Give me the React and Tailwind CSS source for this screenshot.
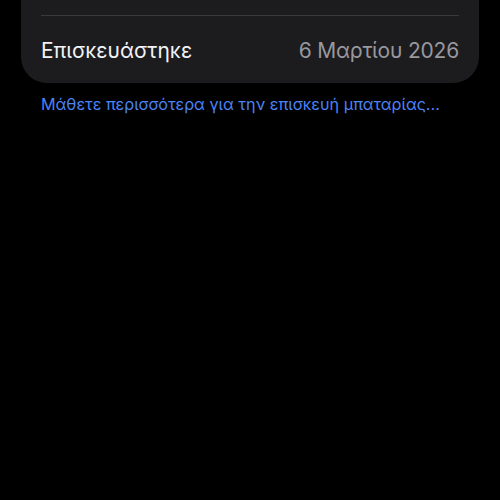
export default function App() {
    return (
        <div className="min-h-[500px] w-[500px] bg-black">
            <div className="mx-[21px] rounded-b-[26px] bg-[#1c1c1e] px-5 pt-[15px] font-['Inter',sans-serif]">
                <div className="h-px bg-[#3a3a3c]" />
                <div className="flex h-[67px] items-center justify-between pt-[3px]">
                    <span className="text-[21px] text-[#f2f2f7]">Επισκευάστηκε</span>
                    <span className="text-[21px] tracking-[-0.2px] text-[#98989e]">6 Μαρτίου 2026</span>
                </div>
            </div>
            <p className="mt-[9px] pl-[41px] font-['Inter',sans-serif] text-[16.2px] text-[#4b82f5]">
                Μάθετε περισσότερα για την επισκευή μπαταρίας...
            </p>
        </div>
    );
}
